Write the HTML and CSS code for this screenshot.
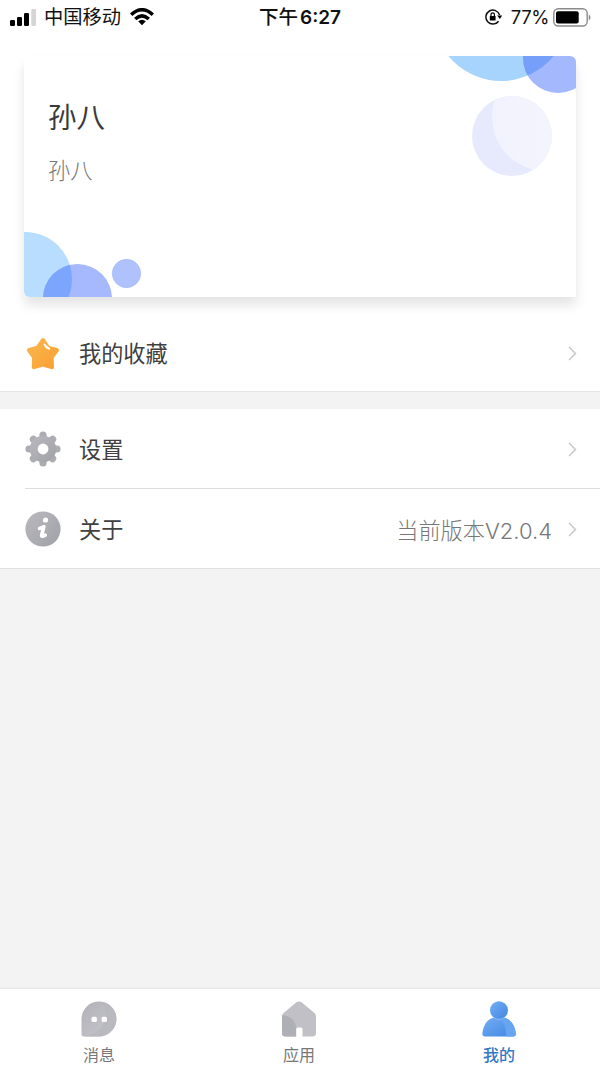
FILE: index.html
```html
<!DOCTYPE html>
<html lang="zh-CN">
<head>
<meta charset="utf-8">
<title>我的</title>
<link rel="stylesheet" href="styles.css">
</head>
<body>
<div class="screen">
  <header class="status">
    <div class="status-left">
      <svg class="signal" width="26" height="17" viewBox="0 0 26 17"><rect x="0" y="11" width="5" height="6" rx="1.3"/><rect x="7" y="8" width="5" height="9" rx="1.3"/><rect x="14" y="4" width="5" height="13" rx="1.3"/><rect x="21.3" y="0" width="4.7" height="17" rx="1.3" fill="#d5d5d5"/></svg>
      <span class="carrier">中国移动</span>
      <svg class="wifi" width="24" height="18" viewBox="0 0 24 18"><g fill="none" stroke="#000" stroke-width="3.5"><path d="M1.2 6.7Q12-3.2 22.8 6.7"/><path d="M5.2 11Q12 4.8 18.8 11"/></g><path d="M8.2 13.2Q12 10.2 15.8 13.2L12 17.2Z"/></svg>
    </div>
    <div class="status-time">下午<span class="clock">6:27</span></div>
    <div class="status-right">
      <svg class="lock" width="18" height="16" viewBox="0 0 18 16"><path d="M13.6 12.2A7 7 0 1 1 14.6 6" fill="none" stroke="#111" stroke-width="1.5"/><path d="M12.2 6.6h5l-2.4 3.4Z"/><rect x="4.8" y="7" width="5.8" height="4.6" rx=".6"/><path d="M6 7V5.6a1.7 1.7 0 0 1 3.4 0V7" fill="none" stroke="#000" stroke-width="1.2"/></svg>
      <span class="percent">77%</span>
      <svg class="battery" width="39" height="19" viewBox="0 0 39 19"><rect x=".8" y=".8" width="33.4" height="17.2" rx="4.5" fill="#fff" stroke="#8b8b8b" stroke-width="1.4"/><rect x="3" y="3.2" width="22.7" height="12.4" rx="2"/><path d="M35.8 6.5q1.7 1 1.7 2.9t-1.7 2.9Z" fill="#8b8b8b"/></svg>
    </div>
  </header>

  <section class="profile">
    <div class="card">
      <svg class="bubbles" width="552" height="241" viewBox="0 0 552 241">
        <defs>
          <clipPath id="pale"><circle cx="488" cy="80" r="40"/></clipPath>
          <clipPath id="top"><circle cx="477" cy="-42.6" r="67.6"/></clipPath>
          <clipPath id="low"><circle cx="1" cy="223" r="47"/></clipPath>
          <linearGradient id="mist"><stop offset="0" stop-color="#f0f2fd"/><stop offset="1" stop-color="#f6f7fe"/></linearGradient>
        </defs>
        <circle cx="477" cy="-42.6" r="67.6" fill="#a7d4fd"/>
        <circle cx="534" cy="2" r="35" fill="#a3b8fd"/>
        <circle cx="534" cy="2" r="35" fill="#759ff9" clip-path="url(#top)"/>
        <circle cx="488" cy="80" r="40" fill="#e6eafc"/>
        <circle cx="522" cy="61" r="54" fill="url(#mist)" clip-path="url(#pale)"/>
        <circle cx="1" cy="223" r="47" fill="#b8ddff"/>
        <circle cx="53.5" cy="242.5" r="34.5" fill="#a6b9fe"/>
        <circle cx="53.5" cy="242.5" r="34.5" fill="#7ca6fe" clip-path="url(#low)"/>
        <circle cx="102.5" cy="217.5" r="14.2" fill="#b0c2fd" stroke="#9db5f8" stroke-width=".6"/>
      </svg>
      <div class="who">
        <h1 class="name">孙八</h1>
        <p class="alias">孙八</p>
      </div>
    </div>
  </section>

  <main class="list">
    <div class="row favorite">
      <svg class="row-icon" width="36" height="36" viewBox="0 0 36 36">
        <defs><linearGradient id="gold" x1="0" y1="0" x2="1" y2="1"><stop offset="0" stop-color="#f8b84d"/><stop offset="1" stop-color="#fb9f32"/></linearGradient></defs>
        <path d="M18 4.3 22.8 11.8 31.7 14.2 26.4 21.1 26.8 31 17.8 28.3 9 31 9.2 21.1 4 14.2 12.7 11.8Z" fill="url(#gold)" stroke="url(#gold)" stroke-width="4.4" stroke-linejoin="round"/>
        <path d="M19 8.4Q20 12.4 24.4 13.4 25.2 11.6 23.2 11.2 21 10.4 20.2 8.2 19.4 7.4 19 8.4Z" fill="#fff" stroke="#fff" stroke-width="1" stroke-linejoin="round"/>
      </svg>
      <span class="label">我的收藏</span>
      <svg class="chevron" width="9" height="15" viewBox="0 0 9 15"><path d="M1 1 7.5 7.5 1 14"/></svg>
    </div>
    <div class="row settings">
      <svg class="row-icon" width="36" height="36" viewBox="0 0 36 36">
        <defs><linearGradient id="steel" x1="0" y1="0" x2="1" y2="1"><stop offset="0" stop-color="#b9b9be"/><stop offset="1" stop-color="#a0a0a8"/></linearGradient></defs>
        <g fill="none" stroke="#acacb2" stroke-width="7.2" stroke-linecap="round"><path d="M18 4V32M4 18H32M8.4 8.4 27.6 27.6M8.4 27.6 27.6 8.4"/></g>
        <circle cx="18" cy="18" r="13.2" fill="url(#steel)"/><circle cx="18" cy="18" r="5.4" fill="#fff"/>
      </svg>
      <span class="label">设置</span>
      <svg class="chevron" width="9" height="15" viewBox="0 0 9 15"><path d="M1 1 7.5 7.5 1 14"/></svg>
    </div>
    <div class="row about">
      <svg class="row-icon" width="36" height="36" viewBox="0 0 36 36">
        <circle cx="18" cy="18" r="17.6" fill="url(#steel)"/>
        <circle cx="20.5" cy="9" r="2.6" fill="#fff"/>
        <path d="M14.6 17.4Q17.5 16.9 18.8 15.6L16.7 24.2Q16.3 26.3 20.2 24.2" fill="none" stroke="#fff" stroke-width="3.7" stroke-linecap="round" stroke-linejoin="round"/>
      </svg>
      <span class="label">关于</span>
      <span class="version">当前版本<span class="number">V2.0.4</span></span>
      <svg class="chevron" width="9" height="15" viewBox="0 0 9 15"><path d="M1 1 7.5 7.5 1 14"/></svg>
    </div>
  </main>

  <nav class="tabs">
    <div class="tab">
      <svg width="36" height="36" viewBox="0 0 36 36">
        <defs><linearGradient id="gray" x1="0" y1="0" x2="1" y2="1"><stop offset="0" stop-color="#b1b1b7"/><stop offset="1" stop-color="#c7c7cd"/></linearGradient></defs>
        <path d="M18 .5A17.5 17.5 0 0 1 18 35.5H3Q.5 35.5.5 33V18A17.5 17.5 0 0 1 18 .5Z" fill="url(#gray)"/>
        <path d="M20.5.7A17.5 17.5 0 0 1 18 35.5H3Q24 31 24.5 15 24.7 7 20.5.7Z" fill="#b7b7be" opacity=".8"/>
        <rect x="10.5" y="15.7" width="5.4" height="5.4" rx="1.7" fill="#fff"/><rect x="20.6" y="15.7" width="5.4" height="5.4" rx="1.7" fill="#fff"/>
      </svg>
      <span class="tab-label">消息</span>
    </div>
    <div class="tab">
      <svg width="36" height="36" viewBox="0 0 36 36">
        <defs><clipPath id="house"><path d="M15.8 1.1Q18 0 20.2 1.1L33.5 12Q35 13.4 35 15.5V32Q35 35.5 31.5 35.5H21.5V28Q21.5 26.5 20 26.5H16.8Q15.2 26.5 15.2 28V35.5H4.5Q1 35.5 1 32V15.5Q1 13.4 2.5 12Z"/></clipPath></defs>
        <g clip-path="url(#house)"><path d="M0 0H36V36H0Z" fill="#c0c0c6"/><path d="M0 14Q14 15 15.2 26.5V36H0Z" fill="#afafb6"/></g>
      </svg>
      <span class="tab-label">应用</span>
    </div>
    <div class="tab active">
      <svg width="36" height="36" viewBox="0 0 36 36">
        <defs><linearGradient id="blue" x1="0" y1="0" x2="1" y2="1"><stop offset="0" stop-color="#75adf3"/><stop offset="1" stop-color="#3f87e3"/></linearGradient></defs>
        <path d="M4 35.5Q1 35.5 1.4 32C2.6 23 7 18 13 16.6H23C29 18 33.4 23 34.8 32Q35.2 35.5 32 35.5Z" fill="url(#blue)"/>
        <path d="M18.5 17H23C29 18 33.4 23 34.8 32Q35.2 35.5 32 35.5H25Q26 24 18.5 17Z" fill="#68a5f1"/>
        <circle cx="18" cy="9.3" r="9.2" fill="#b5d3f8"/><circle cx="18" cy="9.3" r="8.8" fill="url(#blue)"/>
      </svg>
      <span class="tab-label">我的</span>
    </div>
  </nav>
</div>
</body>
</html>
```
FILE: styles.css
```css
* { box-sizing: border-box; }
body { margin: 0; font-family: "Liberation Sans", "Noto Sans CJK SC", sans-serif; }
svg { display: block; flex: none; }
.screen { width: 600px; height: 1067px; display: flex; flex-direction: column; background: #f3f3f3; overflow: hidden; }

.status { height: 34px; padding: 0 10px 2px; display: grid; grid-template-columns: 1fr auto 1fr; align-items: center; background: #fff; color: #111; font-size: 19px; line-height: 32px; }
.status-left, .status-right { display: flex; align-items: center; }
.status-right { justify-content: flex-end; }
.carrier { margin: 0 9px 0 8px; padding-top: 2px; font-size: 19.3px; line-height: 30px; }
.status-time { font-family: "Noto Sans CJK SC", sans-serif; font-weight: 500; font-size: 19.5px; }
.clock { margin-left: 2px; font-family: Inter, sans-serif; font-weight: 600; font-size: 19px; }
.percent { margin: 0 4px 0 8px; font-family: Inter, sans-serif; font-size: 18.5px; letter-spacing: -.4px; }
.battery { margin-right: -2px; }

.profile { height: 282px; padding: 22px 24px 0; background: #fff; }
.card { position: relative; height: 241px; border-radius: 6px 6px 0 6px; background: #fff; box-shadow: 0 8px 12px rgba(0, 0, 0, .11); }
.bubbles { position: absolute; inset: 0; border-radius: 6px 6px 0 6px; }
.who { position: relative; padding: 42px 24px; }
.name { margin: 0; color: #3a3a3a; font-size: 28.5px; font-weight: 400; line-height: 40px; }
.alias { margin: 18px 0 0; color: #777; font-size: 22.3px; font-weight: 300; line-height: 32px; }

.row { display: flex; align-items: center; height: 80px; padding: 0 23px 0 25px; background: #fff; }
.favorite { height: 76px; margin-bottom: 17px; border-bottom: 1px solid #e5e5e5; }
.settings { background: linear-gradient(#dedede, #dedede) 25px 100% / 100% 1px no-repeat #fff; }
.about { padding-top: 1px; border-bottom: 1px solid #e0e0e0; }
.label { margin-left: 18px; padding-top: 4px; color: #404040; font-size: 22.2px; line-height: 32px; }
.favorite .label { padding-top: 3px; }
.chevron { margin-left: auto; fill: none; stroke: #c4c4c4; stroke-width: 1.4; }
.version { margin-left: auto; padding-top: 2px; color: #777; font-family: "Noto Sans CJK SC", sans-serif; font-weight: 300; font-size: 22.2px; line-height: 32px; }
.number { font-family: Inter, sans-serif; font-size: 22px; }
.version + .chevron { margin-left: 16px; }

.tabs { display: flex; height: 78px; margin-top: auto; padding: 12px 0 0; background: #fff; box-shadow: 0 -1px 2px rgba(0, 0, 0, .06); }
.tab { flex: 1; display: flex; flex-direction: column; align-items: center; margin-left: -2px; color: #777; }
.tab-label { margin-top: 5px; font-family: "Noto Sans CJK SC", sans-serif; font-size: 16px; line-height: 24px; }
.active { color: #3179c5; }
.active .tab-label { font-weight: 500; }
```
